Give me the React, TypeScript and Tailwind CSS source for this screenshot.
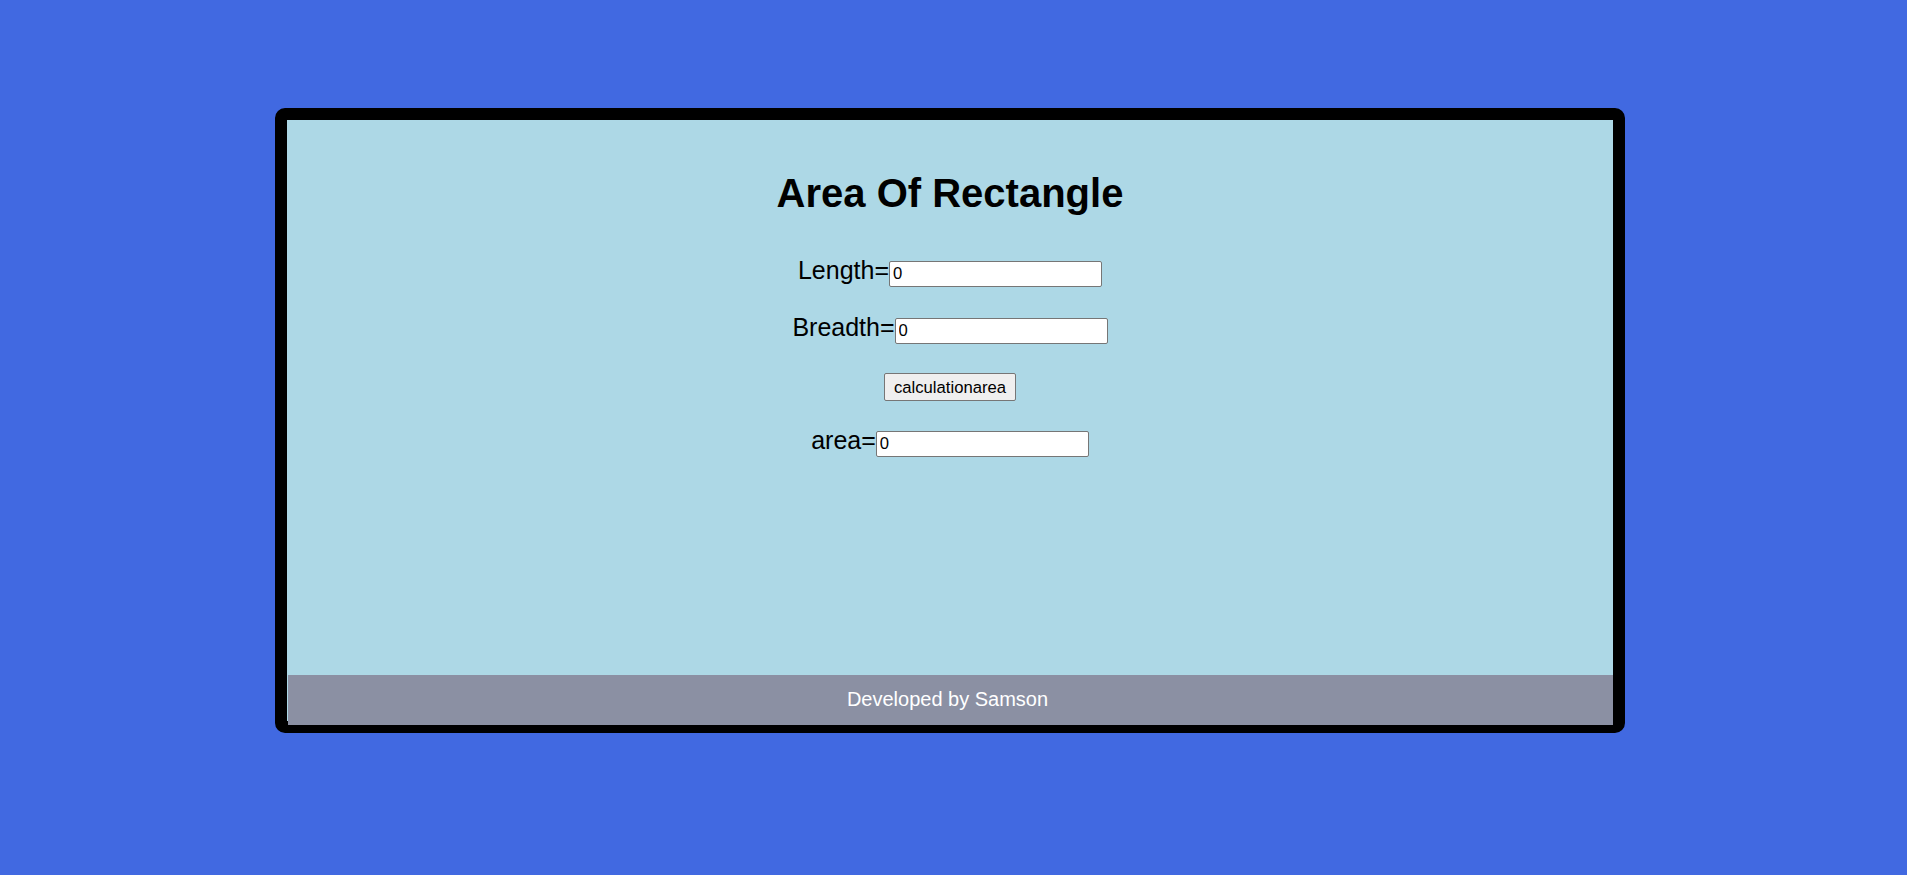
import React from "react";

function Row({ label, inputClass }: { label: string; inputClass?: string }) {
  return (
    <div className="flex items-baseline justify-center">
      <span className="text-[25px] leading-[29px] text-black">{label}</span>
      <input
        readOnly
        value="0"
        className={
          "h-[26px] w-[213px] rounded-[2px] border border-[#767676] bg-white px-[3px] py-0 text-[16.67px] text-black outline-none " +
          (inputClass ?? "")
        }
      />
    </div>
  );
}

export default function App() {
  return (
    <div
      className="min-h-screen w-full bg-[#4169e1] pt-[108px]"
      style={{ fontFamily: '"Liberation Sans", Arial, sans-serif' }}
    >
      <div className="ml-[275px] flex h-[625px] w-[1350px] flex-col rounded-[10px] border-[12px] border-black bg-[#add8e6]">
        <div className="flex flex-1 flex-col items-center">
          <h1 className="mt-[50px] text-[40px] font-bold leading-[46px] text-black">Area Of Rectangle</h1>
          <div className="mt-[40px]">
            <Row label="Length=" />
          </div>
          <div className="mt-[26px]">
            <Row label="Breadth=" />
          </div>
          <button className="mt-[29px] h-[28px] w-[132px] rounded-[2px] border border-[#767676] bg-[#efefef] text-[16.67px] text-black">
            calculationarea
          </button>
          <div className="mt-[25px]">
            <Row label="area=" />
          </div>
        </div>
        <div className="mb-[-4px] ml-px flex h-[50px] items-center justify-center bg-[#8b90a3] pb-[2px] pr-[6px] text-[20px] text-white">
          Developed by Samson
        </div>
      </div>
    </div>
  );
}
